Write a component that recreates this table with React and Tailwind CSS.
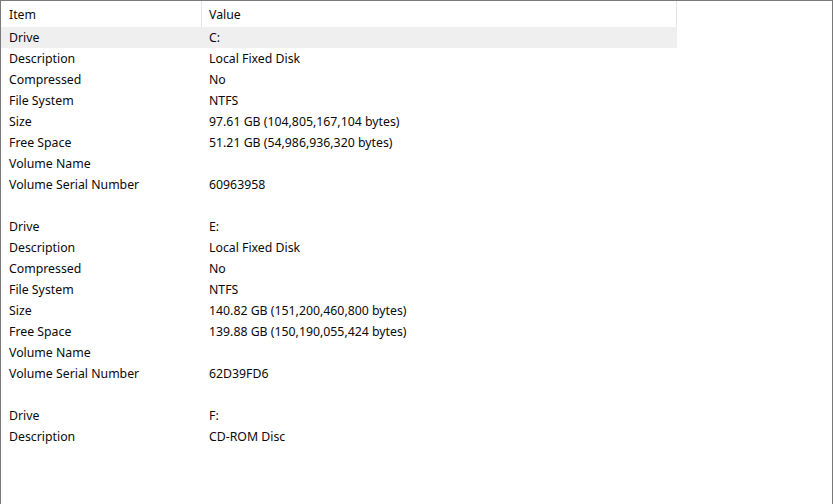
const groups = [
  [
    ["Drive", "C:"],
    ["Description", "Local Fixed Disk"],
    ["Compressed", "No"],
    ["File System", "NTFS"],
    ["Size", "97.61 GB (104,805,167,104 bytes)"],
    ["Free Space", "51.21 GB (54,986,936,320 bytes)"],
    ["Volume Name", ""],
    ["Volume Serial Number", "60963958"],
  ],
  [
    ["Drive", "E:"],
    ["Description", "Local Fixed Disk"],
    ["Compressed", "No"],
    ["File System", "NTFS"],
    ["Size", "140.82 GB (151,200,460,800 bytes)"],
    ["Free Space", "139.88 GB (150,190,055,424 bytes)"],
    ["Volume Name", ""],
    ["Volume Serial Number", "62D39FD6"],
  ],
  [
    ["Drive", "F:"],
    ["Description", "CD-ROM Disc"],
  ],
];

function Row({ item, value, selected }) {
  return (
    <div className={selected ? "grid grid-cols-[201px_475px] h-[21px] items-center pt-[2px] w-[676px] bg-[#efefef]" : "grid grid-cols-[201px_475px] h-[21px] items-center pt-[2px] w-[676px]"}>
      <div className="pl-[8px] whitespace-nowrap">{item}</div>
      <div className="pl-[7px] whitespace-nowrap">{value}</div>
    </div>
  );
}

export default function App() {
  const rows = [];
  groups.forEach((g, gi) => {
    if (gi > 0) rows.push(<Row key={"b" + gi} item="" value="" />);
    g.forEach(([a, b], i) => rows.push(<Row key={gi + "-" + i} item={a} value={b} selected={gi === 0 && i === 0} />));
  });
  return (
    <div className="w-[834px] h-[504px] bg-white overflow-hidden">
      <div
        className="w-[833px] h-[504px] border-t border-l border-r border-[#7a7a7a] text-[12.3px] text-[#0a0a0a]"
        style={{ fontFamily: '"Noto Sans", "Open Sans", sans-serif' }}
      >
        <div className="grid grid-cols-[201px_475px] h-[26px] w-[676px]">
          <div className="flex items-center pl-[8px] pt-[3px] border-r border-[#e5e5e5]">Item</div>
          <div className="flex items-center pl-[7px] pt-[3px] border-r border-[#e5e5e5]">Value</div>
        </div>
        <div className="flex flex-col">{rows}</div>
      </div>
    </div>
  );
}
